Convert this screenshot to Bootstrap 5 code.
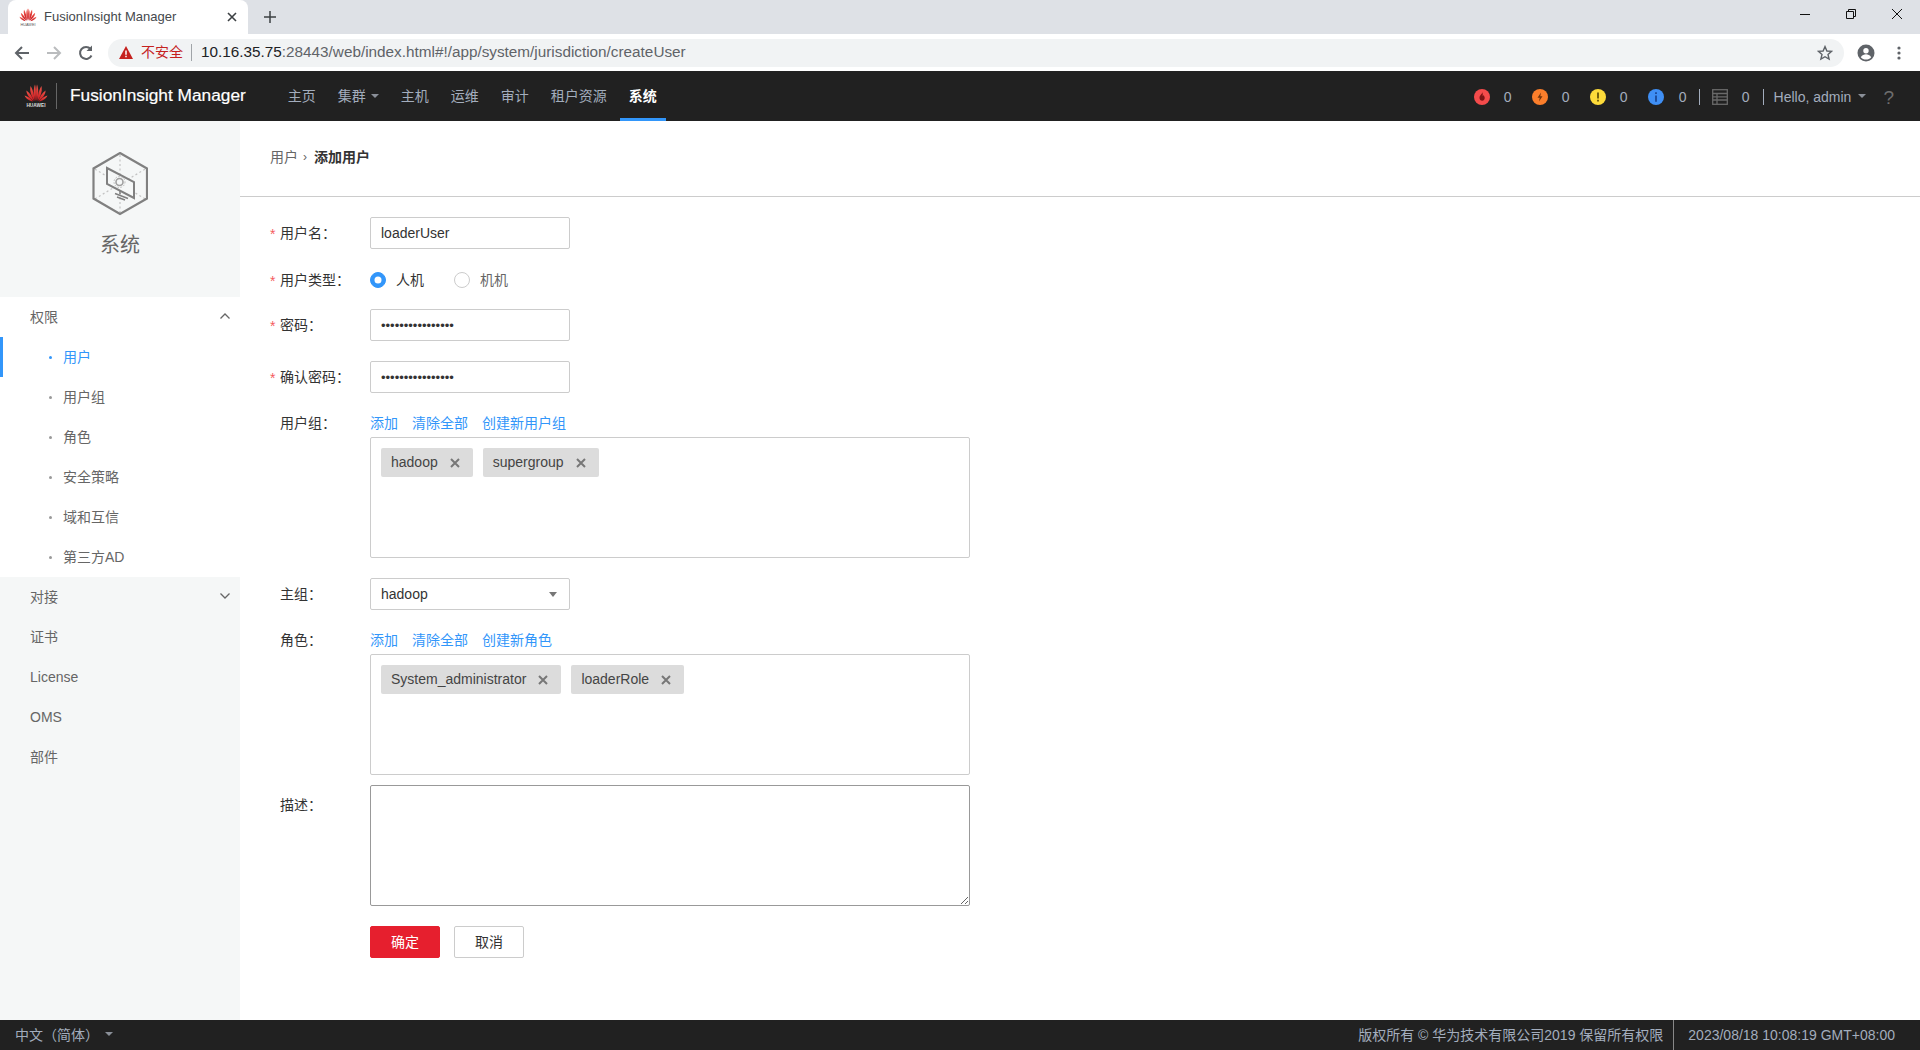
<!DOCTYPE html>
<html lang="zh-CN">
<head>
  <meta charset="UTF-8">
  <meta name="viewport" content="width=device-width, initial-scale=1.0">
  <title>FusionInsight Manager</title>
  <link href="https://cdn.jsdelivr.net/npm/bootstrap@5.3.0/dist/css/bootstrap.min.css" rel="stylesheet">
  <style>
    html, body { height: 100%; }
    body { font-family: "Liberation Sans", "Noto Sans CJK SC", sans-serif; font-size: 14px; color: #333; overflow: hidden; }
    .page-wrap { height: 1050px; }

    /* browser chrome */
    .tab-strip { height: 34px; background: #dee1e6; padding-left: 8px; flex: none; }
    .tab-item { width: 240px; height: 34px; background: #fff; border-radius: 8px 8px 0 0; padding: 0 10px 0 11px; font-size: 13px; color: #45494d; }
    .tab-title { margin-left: 7px; }
    .tab-close { margin-left: auto; margin-right: 1px; }
    .tab-plus { margin-left: 16px; }
    .win-btns { margin-left: auto; }
    .win-btn { width: 46px; height: 28px; margin-top: -6px; }
    .tool-bar { height: 37px; background: #fff; padding-left: 13px; flex: none; }
    .tool-btn { width: 18px; height: 18px; margin-right: 14px; }
    .omni-box { width: 1736px; height: 28px; margin-left: -1px; background: #f1f3f4; border-radius: 14px; padding: 0 11px 0 11px; }
    .warn-text { color: #c5221f; margin-left: 8px; font-size: 14px; }
    .omni-sep { width: 1px; height: 17px; background: #a0a4a8; margin: 0 9px 0 8px; }
    .omni-url { color: #202124; font-size: 15.3px; }
    .omni-url span { color: #5f6368; }
    .tool-end { margin-left: auto; }
    .tool-right { margin-left: 13px; }
    .tool-dots { margin-left: 22px; }

    /* top navigation */
    .top-bar { height: 50px; background: #212121; flex: none; color: #a3adbd; padding-left: 24px; }
    .logo-sep { width: 1px; height: 26px; background: #666; margin: 0 13px 0 8px; }
    .logo-name { color: #fff; font-size: 17.3px; font-weight: 500; -webkit-text-stroke: .2px #fff; margin-right: 33px; white-space: nowrap; }
    .top-link { color: #a3adbd; height: 50px; padding: 3px 9px 0; margin-right: 4px; display: flex; align-items: center; text-decoration: none; border-bottom: 3px solid transparent; }
    .top-link.dropdown-toggle::after { margin-left: 5px; color: #8a8f98; }
    .top-link.is-on { color: #fff; font-weight: 700; border-bottom-color: #3296fa; }
    .top-right { margin-left: auto; margin-top: 2px; padding-right: 26px; }
    .alarm-num { width: 34px; margin-right: 8px; text-align: right; padding-right: 12px; }
    .alarm-num.narrow { width: 31px; margin-right: 4px; padding-right: 8px; }
    .bar-sep { width: 1px; height: 16px; background: #a3adbd; }
    .grid-num { width: 22px; text-align: right; padding-right: 0; margin-right: 13px; }
    .user-name.dropdown-toggle::after { margin-left: 7px; color: #8a8f98; }
    .user-name { margin-left: 10px; }
    .help-mark { font-size: 19px; color: #6e6e6e; margin-left: 17px; line-height: 1; }

    /* sidebar */
    .side-col { width: 240px; background: #f5f7f7; flex: none; color: #666; }
    .side-head { height: 176px; padding-top: 31px; }
    .side-title { font-size: 20px; line-height: 28px; margin-top: 15px; color: #666; }
    .side-open { background: #fff; }
    .side-row { height: 40px; padding: 0 10px 0 30px; position: relative; color: #666; text-decoration: none; }
    .side-sub { padding-left: 49px; }
    .side-sub::before { content: ""; width: 3px; height: 3px; border-radius: 50%; background: #999; margin-right: 11px; }
    .side-sub.is-on { color: #3296fa; }
    .side-sub.is-on::before { background: #3296fa; }
    .side-sub.is-on::after { content: ""; position: absolute; left: 0; top: 0; width: 3px; height: 40px; background: #3296fa; }
    .side-arrow { margin-left: auto; margin-top: -2px; }

    /* main area */
    .main-col { background: #fff; min-width: 0; }
    .crumb-bar { height: 76px; padding: 0 0 3px 30px; border-bottom: 1px solid #ccc; margin-bottom: 20px; }
    .crumb-sep { margin: 0 5px; color: #666; font-size: 12px; }
    .crumb-link { color: #666; }
    .crumb-now { font-weight: 700; color: #333; margin-left: 2px; }
    .form-wrap { padding-left: 30px; }
    .form-line { display: flex; align-items: center; }
    .form-line.top-align { align-items: flex-start; }
    .line-label { width: 100px; flex: none; position: relative; padding-left: 10px; color: #333; white-space: nowrap; }
    .desc-label { padding-top: 10px; }
    .req-star { position: absolute; left: 0; top: 1px; color: #f45c5e; }
    .after-15 { margin-bottom: 15px; }
    .after-13 { margin-bottom: 13px; }
    .after-20 { margin-bottom: 20px; }
    .after-19 { margin-bottom: 19px; }
    .after-10 { margin-bottom: 10px; }
    .after-3 { margin-bottom: 3px; }
    .field-box.form-control { width: 200px; height: 32px; border: 1px solid #ccc; border-radius: 2px; padding: 0 10px; font-size: 14px; color: #333; box-shadow: none; }
    .field-box.pass-box { font-size: 13px; letter-spacing: 0; }
    .radio-row { height: 32px; }
    .radio-row .form-check-input { width: 16px; height: 16px; margin: 0; border-color: #ccc; flex: none; }
    .radio-row .form-check-input:checked { background-color: #3296fa; border-color: #3296fa; }
    .radio-text { margin: 0 30px 0 10px; width: 28px; color: #333; padding-top: 1px; }
    .radio-text.off { color: #666; }
    .act-line { height: 22px; }
    .act-link { color: #3296fa; text-decoration: none; margin-right: 14px; }
    .tag-box { width: 600px; height: 121px; border: 1px solid #ccc; border-radius: 2px; padding: 10px; margin-left: 100px; }
    .tag-item { height: 29px; background: #dcdcdc; border-radius: 2px; padding: 0 13px 0 10px; margin-right: 10px; color: #444; }
    .tag-x { margin-left: 12px; }
    .pick-box { width: 200px; height: 32px; border: 1px solid #ccc; border-radius: 2px; padding: 0 12px 0 10px; color: #333; }
    .pick-box::after { margin-left: auto; color: #777; border-top-width: 5px; border-left-width: 4.5px; border-right-width: 4.5px; }
    .desc-box.form-control { width: 600px; height: 121px; min-height: 121px; border: 1px solid #999; border-radius: 2px; box-shadow: none; }
    .act-btn.btn { width: 70px; height: 32px; padding: 0; font-size: 14px; border-radius: 2px; --bs-btn-line-height: 30px; }
    .ok-btn.btn { background: #e61f2e; border-color: #e61f2e; color: #fff; margin-right: 14px; }
    .no-btn.btn { background: #fff; border-color: #ccc; color: #333; }
    .form-btns { margin-left: 100px; padding-top: 0; }

    /* bottom bar */
    .foot-bar { height: 30px; background: #212121; color: #a3adbd; flex: none; padding-left: 15px; font-size: 14px; }
    .foot-lang.dropdown-toggle::after { margin-left: 6px; color: #8a8f98; }
    .foot-right { margin-left: auto; }
    .foot-time { border-left: 1px solid #888; height: 30px; margin-left: 10px; padding: 0 25px 0 14px; }
  </style>
</head>
<body>
  <svg width="0" height="0" class="d-block position-absolute">
    <defs>
      <linearGradient id="petalFill" x1="0" y1="0" x2="0" y2="1">
        <stop offset="0" stop-color="#f0574a"/>
        <stop offset="1" stop-color="#c8151d"/>
      </linearGradient>
      <symbol id="petals" viewBox="0 0 24 18">
        <g fill="url(#petalFill)">
          <path d="M11.4 17 C9.6 12 9 6 11 .6 C12 4 12.2 11 11.4 17Z"/>
          <path d="M12.6 17 C14.4 12 15 6 13 .6 C12 4 11.8 11 12.6 17Z"/>
          <path d="M10.6 17 C7.4 12.6 5.4 7.2 6.6 2 C8.8 5.4 10.4 11 10.6 17Z"/>
          <path d="M13.4 17 C16.6 12.6 18.6 7.2 17.4 2 C15.2 5.4 13.6 11 13.4 17Z"/>
          <path d="M9.8 17 C6.2 14.6 2.6 11.2 2.4 6.4 C5.6 8.8 8.6 12.6 9.8 17Z"/>
          <path d="M14.2 17 C17.8 14.6 21.4 11.2 21.6 6.4 C18.4 8.8 15.4 12.6 14.2 17Z"/>
          <path d="M9 17.6 C5.6 17 1.8 15 .6 11.6 C3.8 12.6 7 14.6 9 17.6Z"/>
          <path d="M15 17.6 C18.4 17 22.2 15 23.4 11.6 C20.2 12.6 17 14.6 15 17.6Z"/>
        </g>
      </symbol>
    </defs>
  </svg>

  <div class="page-wrap d-flex flex-column">
    <!-- browser tab strip -->
    <div class="tab-strip d-flex align-items-end">
      <div class="tab-item d-flex align-items-center">
        <svg width="18" height="18" viewBox="0 0 24 24"><use href="#petals" width="24" height="18"/><text x="12" y="23.5" font-size="5" text-anchor="middle" fill="#555" font-family="Liberation Sans">HUAWEI</text></svg>
        <span class="tab-title">FusionInsight Manager</span>
        <svg class="tab-close" width="10" height="10" viewBox="0 0 10 10"><path d="M1 1 9 9M9 1 1 9" stroke="#3c4043" stroke-width="1.6"/></svg>
      </div>
      <svg class="tab-plus align-self-center" width="12" height="12" viewBox="0 0 12 12"><path d="M6 0v12M0 6h12" stroke="#3c4043" stroke-width="1.5"/></svg>
      <div class="win-btns d-flex align-self-center">
        <div class="win-btn d-flex align-items-center justify-content-center"><svg width="10" height="10" viewBox="0 0 10 10"><path d="M0 5.5h10" stroke="#111" stroke-width="1"/></svg></div>
        <div class="win-btn d-flex align-items-center justify-content-center"><svg width="10" height="10" viewBox="0 0 10 10" fill="none" stroke="#111"><path d="M.5 2.5h7v7h-7zM2.5 2.5v-2h7v7h-2"/></svg></div>
        <div class="win-btn d-flex align-items-center justify-content-center"><svg width="10" height="10" viewBox="0 0 10 10"><path d="M0 0 10 10M10 0 0 10" stroke="#111" stroke-width="1"/></svg></div>
      </div>
    </div>

    <!-- browser address bar -->
    <div class="tool-bar d-flex align-items-center">
      <svg class="tool-btn" viewBox="0 0 18 18" fill="none" stroke="#5f6368" stroke-width="2"><path d="M16 9H3M9 3 3 9l6 6"/></svg>
      <svg class="tool-btn" viewBox="0 0 18 18" fill="none" stroke="#babcbe" stroke-width="2"><path d="M2 9h13M9 3l6 6-6 6"/></svg>
      <svg class="tool-btn" viewBox="0 0 18 18" fill="none" stroke="#5f6368" stroke-width="2"><path d="M14.5 11.5A6 6 0 1 1 13.6 5"/><path d="M15 1.5V7H9.5" fill="#5f6368" stroke="none"/></svg>
      <div class="omni-box d-flex align-items-center">
        <svg width="14" height="13" viewBox="0 0 14 13"><path d="M7 0 14 13H0Z" fill="#c5221f"/><path d="M7 4.5v4.2M7 9.8v1.5" stroke="#fff" stroke-width="1.5"/></svg>
        <span class="warn-text">不安全</span>
        <span class="omni-sep"></span>
        <span class="omni-url">10.16.35.75<span>:28443/web/index.html#!/app/system/jurisdiction/createUser</span></span>
        <svg class="tool-end" width="16" height="16" viewBox="0 0 16 16" fill="none" stroke="#5f6368" stroke-width="1.4"><path d="M8 1.6 9.9 6l4.7.4-3.6 3.1 1.1 4.6L8 11.7l-4.1 2.4L5 9.5 1.4 6.4 6.1 6Z"/></svg>
      </div>
      <svg class="tool-right" width="18" height="18" viewBox="0 0 18 18"><circle cx="9" cy="9" r="8.5" fill="#5f6368"/><circle cx="9" cy="6.8" r="2.7" fill="#fff"/><path d="M3.8 13.2c1.4-2.2 3.2-2.9 5.2-2.9s3.8.7 5.2 2.9C13 14.7 11 15.5 9 15.5s-4-.8-5.2-2.3Z" fill="#fff"/></svg>
      <svg class="tool-dots" width="4" height="14" viewBox="0 0 4 14" fill="#5f6368"><circle cx="2" cy="2" r="1.6"/><circle cx="2" cy="7" r="1.6"/><circle cx="2" cy="12" r="1.6"/></svg>
    </div>

    <!-- product navigation -->
    <div class="top-bar d-flex align-items-center">
      <svg width="24" height="28" viewBox="0 0 24 24" preserveAspectRatio="xMidYMid meet"><use href="#petals" width="24" height="18"/><text x="12" y="23" font-size="4.8" font-weight="700" text-anchor="middle" fill="#ddd" font-family="Liberation Sans">HUAWEI</text></svg>
      <span class="logo-sep"></span>
      <span class="logo-name">FusionInsight Manager</span>
      <a class="top-link" href="#">主页</a>
      <a class="top-link dropdown-toggle" href="#">集群</a>
      <a class="top-link" href="#">主机</a>
      <a class="top-link" href="#">运维</a>
      <a class="top-link" href="#">审计</a>
      <a class="top-link" href="#">租户资源</a>
      <a class="top-link is-on" href="#">系统</a>
      <div class="top-right d-flex align-items-center">
        <svg width="16" height="16" viewBox="0 0 16 16"><circle cx="8" cy="8" r="8" fill="#f44b4b"/><path d="M8.4 2.8c.3 2-2.9 3.3-2.9 6 0 1.7 1.2 3 2.7 3s2.5-1.2 2.5-2.8c0-1.3-.7-2-1-3-.4.6-.6 1-1 1.2.2-1.4 0-3-.3-4.4Z" fill="#7a1414"/></svg>
        <span class="alarm-num">0</span>
        <svg width="16" height="16" viewBox="0 0 16 16"><circle cx="8" cy="8" r="8" fill="#fb7e2b"/><path d="M9 3.5 5.500 8.800h2.200L7 12.500l3.500-5.300H8.300Z" fill="#70340c"/></svg>
        <span class="alarm-num">0</span>
        <svg width="16" height="16" viewBox="0 0 16 16"><circle cx="8" cy="8" r="8" fill="#fddb3a"/><path d="M8 3.500v6M8 10.800v1.800" stroke="#5d4c05" stroke-width="1.7"/></svg>
        <span class="alarm-num">0</span>
        <svg width="16" height="16" viewBox="0 0 16 16"><circle cx="8" cy="8" r="8" fill="#3f8ff5"/><path d="M8 3.300v1.700M8 6.500v6.200" stroke="#173f8a" stroke-width="1.6"/></svg>
        <span class="alarm-num narrow">0</span>
        <span class="bar-sep me-2"></span>
        <svg class="ms-1" width="16" height="16" viewBox="0 0 16 16" fill="none" stroke="#696969" stroke-width="1.3"><rect x=".7" y=".7" width="14.6" height="14.6"/><path d="M.7 4.500h14.600M.7 7.800h14.600M.7 11h14.600M5 4.500v10.800"/></svg>
        <span class="grid-num">0</span>
        <span class="bar-sep"></span>
        <span class="user-name dropdown-toggle">Hello, admin</span>
        <span class="help-mark">?</span>
      </div>
    </div>

    <div class="d-flex flex-grow-1 min-h-0">
      <!-- left menu -->
      <div class="side-col">
        <div class="side-head text-center">
          <svg width="56" height="64" viewBox="0 0 56 64" fill="none">
            <path d="M28 32V3M28 32v29M28 32 2.500 17M28 32l25.500-15M28 32 2.500 47M28 32l25.500 15" stroke="#c4c4c4" stroke-width="1.2" stroke-dasharray="2 2.500"/>
            <path d="M28 1 55 16.500v30L28 62 1.500 46.500v-30Z" stroke="#808080" stroke-width="2.2"/>
            <path d="M15 16 42 30v16L15 32Z" fill="#f5f7f7" stroke="#808080" stroke-width="2"/>
            <circle cx="27.500" cy="30" r="3.500" stroke="#a0a0a0" stroke-width="1.6"/>
            <circle cx="27.500" cy="30" r="5.500" stroke="#b8b8b8" stroke-width="1" stroke-dasharray="1.500 1.500"/>
            <path d="M28 39v3M23 41.500l13 5M25 45l8 3" stroke="#808080" stroke-width="1.5"/>
          </svg>
          <div class="side-title">系统</div>
        </div>
        <div class="side-open">
          <a class="side-row d-flex align-items-center" href="#">权限
            <svg class="side-arrow" width="10" height="6" viewBox="0 0 10 6" fill="none" stroke="#666" stroke-width="1.3"><path d="M.5 5.500 5 1l4.500 4.500"/></svg>
          </a>
          <a class="side-row side-sub is-on d-flex align-items-center" href="#">用户</a>
          <a class="side-row side-sub d-flex align-items-center" href="#">用户组</a>
          <a class="side-row side-sub d-flex align-items-center" href="#">角色</a>
          <a class="side-row side-sub d-flex align-items-center" href="#">安全策略</a>
          <a class="side-row side-sub d-flex align-items-center" href="#">域和互信</a>
          <a class="side-row side-sub d-flex align-items-center" href="#">第三方AD</a>
        </div>
        <a class="side-row d-flex align-items-center" href="#">对接
          <svg class="side-arrow" width="10" height="6" viewBox="0 0 10 6" fill="none" stroke="#666" stroke-width="1.3"><path d="M.5.500 5 5l4.500-4.500"/></svg>
        </a>
        <a class="side-row d-flex align-items-center" href="#">证书</a>
        <a class="side-row d-flex align-items-center" href="#">License</a>
        <a class="side-row d-flex align-items-center" href="#">OMS</a>
        <a class="side-row d-flex align-items-center" href="#">部件</a>
      </div>

      <!-- form -->
      <div class="main-col flex-grow-1">
        <div class="crumb-bar d-flex align-items-center">
          <span class="crumb-link">用户</span><span class="crumb-sep">›</span><span class="crumb-now">添加用户</span>
        </div>
        <form class="form-wrap">
          <div class="form-line after-15">
            <label class="line-label"><span class="req-star">*</span>用户名：</label>
            <input class="form-control field-box" type="text" value="loaderUser">
          </div>
          <div class="form-line after-13">
            <label class="line-label"><span class="req-star">*</span>用户类型：</label>
            <div class="radio-row d-flex align-items-center">
              <input class="form-check-input" type="radio" name="userType" checked>
              <span class="radio-text">人机</span>
              <input class="form-check-input" type="radio" name="userType">
              <span class="radio-text off">机机</span>
            </div>
          </div>
          <div class="form-line after-20">
            <label class="line-label"><span class="req-star">*</span>密码：</label>
            <input class="form-control field-box pass-box" type="password" value="Admin@1234567890">
          </div>
          <div class="form-line after-19">
            <label class="line-label"><span class="req-star">*</span>确认密码：</label>
            <input class="form-control field-box pass-box" type="password" value="Admin@1234567890">
          </div>
          <div class="form-line act-line after-3">
            <label class="line-label">用户组：</label>
            <a class="act-link" href="#">添加</a><a class="act-link" href="#">清除全部</a><a class="act-link" href="#">创建新用户组</a>
          </div>
          <div class="tag-box d-flex align-items-start after-20">
            <span class="tag-item d-flex align-items-center">hadoop<svg class="tag-x" width="10" height="10" viewBox="0 0 10 10"><path d="M1 1 9 9M9 1 1 9" stroke="#777" stroke-width="2"/></svg></span>
            <span class="tag-item d-flex align-items-center">supergroup<svg class="tag-x" width="10" height="10" viewBox="0 0 10 10"><path d="M1 1 9 9M9 1 1 9" stroke="#777" stroke-width="2"/></svg></span>
          </div>
          <div class="form-line after-19">
            <label class="line-label">主组：</label>
            <div class="pick-box dropdown-toggle d-flex align-items-center">hadoop</div>
          </div>
          <div class="form-line act-line after-3">
            <label class="line-label">角色：</label>
            <a class="act-link" href="#">添加</a><a class="act-link" href="#">清除全部</a><a class="act-link" href="#">创建新角色</a>
          </div>
          <div class="tag-box d-flex align-items-start after-10">
            <span class="tag-item d-flex align-items-center">System_administrator<svg class="tag-x" width="10" height="10" viewBox="0 0 10 10"><path d="M1 1 9 9M9 1 1 9" stroke="#777" stroke-width="2"/></svg></span>
            <span class="tag-item d-flex align-items-center">loaderRole<svg class="tag-x" width="10" height="10" viewBox="0 0 10 10"><path d="M1 1 9 9M9 1 1 9" stroke="#777" stroke-width="2"/></svg></span>
          </div>
          <div class="form-line top-align after-20">
            <label class="line-label desc-label">描述：</label>
            <textarea class="form-control desc-box"></textarea>
          </div>
          <div class="form-btns d-flex">
            <button type="button" class="btn act-btn ok-btn">确定</button>
            <button type="button" class="btn act-btn no-btn">取消</button>
          </div>
        </form>
      </div>
    </div>

    <!-- bottom bar -->
    <div class="foot-bar d-flex align-items-center">
      <span class="foot-lang dropdown-toggle">中文（简体）</span>
      <div class="foot-right d-flex align-items-center">
        <span>版权所有 © 华为技术有限公司2019 保留所有权限</span>
        <span class="foot-time d-flex align-items-center">2023/08/18 10:08:19 GMT+08:00</span>
      </div>
    </div>
  </div>
</body>
</html>
